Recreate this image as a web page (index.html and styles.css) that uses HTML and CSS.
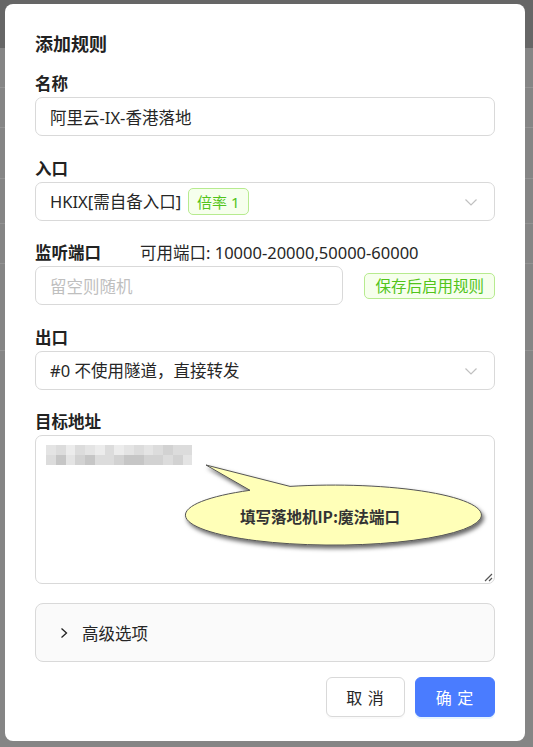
FILE: index.html
```html
<!DOCTYPE html>
<html lang="zh-CN">
<head>
  <meta charset="UTF-8">
  <meta name="viewport" content="width=device-width, initial-scale=1.0">
  <title>添加规则</title>
  <link rel="stylesheet" href="styles.css">
</head>
<body>
  <!-- 背景页面（被遮罩） -->
  <div class="backdrop">
    <div class="bg-top"></div>
    <div class="bg-row r1"></div>
    <div class="bg-row r2"></div>
    <div class="bg-row r3"></div>
    <div class="bg-row r4"></div>
    <div class="bg-row r5"></div>
    <div class="bg-row r6"></div>
  </div>

  <div class="modal">
    <h2 class="modal-title">添加规则</h2>

    <div class="field">
      <div class="label">名称</div>
      <div class="input">阿里云-IX-香港落地</div>
    </div>

    <div class="field">
      <div class="label">入口</div>
      <div class="input select">
        <span>HKIX[需自备入口]</span>
        <span class="tag">倍率 1</span>
        <svg class="arrow" width="14" height="14" viewBox="0 0 14 14"><path d="M1.5 4.5 L7 10 L12.5 4.5" fill="none" stroke="#c0c0c0" stroke-width="1.2"/></svg>
      </div>
    </div>

    <div class="field">
      <div class="label">监听端口<span class="hint">可用端口: 10000-20000,50000-60000</span></div>
      <div class="port-row">
        <div class="input port placeholder">留空则随机</div>
        <span class="tag tag-lg">保存后启用规则</span>
      </div>
    </div>

    <div class="field">
      <div class="label">出口</div>
      <div class="input select">
        <span>#0 不使用隧道，直接转发</span>
        <svg class="arrow" width="14" height="14" viewBox="0 0 14 14"><path d="M1.5 4.5 L7 10 L12.5 4.5" fill="none" stroke="#c0c0c0" stroke-width="1.2"/></svg>
      </div>
    </div>

    <div class="field last">
      <div class="label">目标地址</div>
      <div class="textarea">
        <div class="mosaic">
          <i class="c2"></i><i class="c3"></i><i class="c1"></i><i class="c3"></i><i class="c2"></i><i class="c1"></i><i class="c3"></i><i class="c1"></i><i class="c2"></i><i class="c3"></i><i class="c2"></i><i class="c3"></i><i class="c4"></i><i class="c3"></i><i class="c3"></i>
          <i class="c3"></i><i class="c5"></i><i class="c2"></i><i class="c4"></i><i class="c5"></i><i class="c3"></i><i class="c3"></i><i class="c4"></i><i class="c5"></i><i class="c5"></i><i class="c4"></i><i class="c4"></i><i class="c3"></i><i class="c4"></i><i class="c2"></i>
        </div>
        <svg class="bubble" width="320" height="100" viewBox="0 0 320 100">
          <defs>
            <filter id="sh" x="-10%" y="-30%" width="120%" height="170%">
              <feDropShadow dx="2" dy="3" stdDeviation="2" flood-color="#000" flood-opacity="0.6"/>
            </filter>
          </defs>
          <path d="M74 33.3 L30 8 L114 29.4 A148 30 0 1 1 74 33.3 Z" fill="#ffffb8" stroke="#555" stroke-width="1" filter="url(#sh)"/>
        </svg>
        <span class="bubble-text">填写落地机IP:魔法端口</span>
        <svg class="grip" width="10" height="10" viewBox="0 0 10 10"><path d="M9 2 L2 9 M9 6 L6 9" stroke="#555" stroke-width="1.2"/></svg>
      </div>
    </div>

    <div class="collapse">
      <svg width="12" height="12" viewBox="0 0 12 12"><path d="M3.5 1.5 L8.5 6 L3.5 10.5" fill="none" stroke="#222" stroke-width="1.3"/></svg>
      <span>高级选项</span>
    </div>

    <div class="footer">
      <button class="btn">取 消</button>
      <button class="btn primary">确 定</button>
    </div>
  </div>
</body>
</html>
```

FILE: styles.css
```css
* {
  box-sizing: border-box;
}

html, body {
  margin: 0;
  height: 100%;
}

body {
  font-family: "Noto Sans", "Noto Sans CJK SC", sans-serif;
  color: #262626;
  background: #858585;
  overflow: hidden;
  position: relative;
}

.backdrop {
  position: absolute;
  inset: 0;
}

.bg-top {
  height: 48px;
  background: #666666;
}

.bg-row {
  height: 1px;
  background: #939393;
}

.r1 { margin-top: 39px; }
.r2 { margin-top: 39px; }
.r3 { margin-top: 50px; }
.r4 { margin-top: 44px; }
.r5 { margin-top: 39px; }
.r6 { margin-top: 86px; }

.modal {
  position: absolute;
  left: 5px;
  top: 4px;
  width: 520px;
  height: 737px;
  background: #fff;
  border-radius: 8px;
  padding: 26px 30px 0 30px;
}

.modal-title {
  margin: 0 0 15px 0;
  font-size: 18px;
  font-weight: 700;
  line-height: 28px;
  color: #222;
}

.field {
  margin-bottom: 21.5px;
}

.field.last {
  margin-bottom: 19px;
}

.label {
  font-size: 16.5px;
  font-weight: 700;
  line-height: 22px;
  margin-bottom: 2px;
  color: #222;
}

.hint {
  font-weight: 400;
  margin-left: 39px;
  color: #262626;
}

.input {
  height: 39px;
  border: 1px solid #d9d9d9;
  border-radius: 7px;
  padding: 0 14px;
  display: flex;
  align-items: center;
  gap: 7px;
  font-size: 16.5px;
  color: #262626;
}

.select {
  position: relative;
}

.arrow {
  position: absolute;
  right: 16px;
  top: 12px;
}

.tag {
  display: inline-flex;
  align-items: center;
  height: 27px;
  padding: 0 8px;
  font-size: 15px;
  color: #52c41a;
  background: #f6ffed;
  border: 1px solid #b7eb8f;
  border-radius: 5px;
}

.tag-lg {
  height: 26px;
  padding: 0 10px;
  font-size: 15.5px;
}

.port-row {
  display: flex;
  align-items: center;
  justify-content: space-between;
}

.port {
  width: 308px;
}

.placeholder {
  color: #bfbfbf;
}

.textarea {
  position: relative;
  height: 149px;
  border: 1px solid #d9d9d9;
  border-radius: 7px;
  padding: 9px 10px;
}

.mosaic {
  display: grid;
  grid-template-columns: repeat(15, 9.75px);
  grid-auto-rows: 10px;
}

.mosaic i { display: block; }
.c1 { background: #ececec; }
.c2 { background: #e4e4e4; }
.c3 { background: #dcdcdc; }
.c4 { background: #d2d2d2; }
.c5 { background: #c6c6c6; }

.bubble {
  position: absolute;
  left: 140px;
  top: 21px;
  overflow: visible;
}

.bubble-text {
  position: absolute;
  left: 204px;
  top: 69px;
  line-height: 22px;
  font-family: "Noto Sans CJK SC", sans-serif;
  font-size: 15.5px;
  font-weight: 700;
  color: #333;
}

.grip {
  position: absolute;
  right: 1px;
  bottom: 1px;
}

.collapse {
  height: 59px;
  background: #fafafa;
  border: 1px solid #d9d9d9;
  border-radius: 8px;
  display: flex;
  align-items: center;
  gap: 12px;
  padding-left: 22px;
  font-size: 16.5px;
  color: #262626;
}

.footer {
  display: flex;
  justify-content: flex-end;
  gap: 10px;
  margin-top: 15px;
}

.btn {
  width: 79px;
  height: 40px;
  border: 1px solid #d9d9d9;
  border-radius: 6px;
  background: #fff;
  font-family: "Noto Sans CJK SC", sans-serif;
  font-size: 16px;
  color: #262626;
  letter-spacing: 1px;
  box-shadow: 0 2px 0 rgba(0, 0, 0, 0.02);
}

.primary {
  width: 80px;
  background: #4a7cff;
  border-color: #4a7cff;
  color: #fff;
  box-shadow: 0 2px 0 rgba(5, 145, 255, 0.1);
}
```
